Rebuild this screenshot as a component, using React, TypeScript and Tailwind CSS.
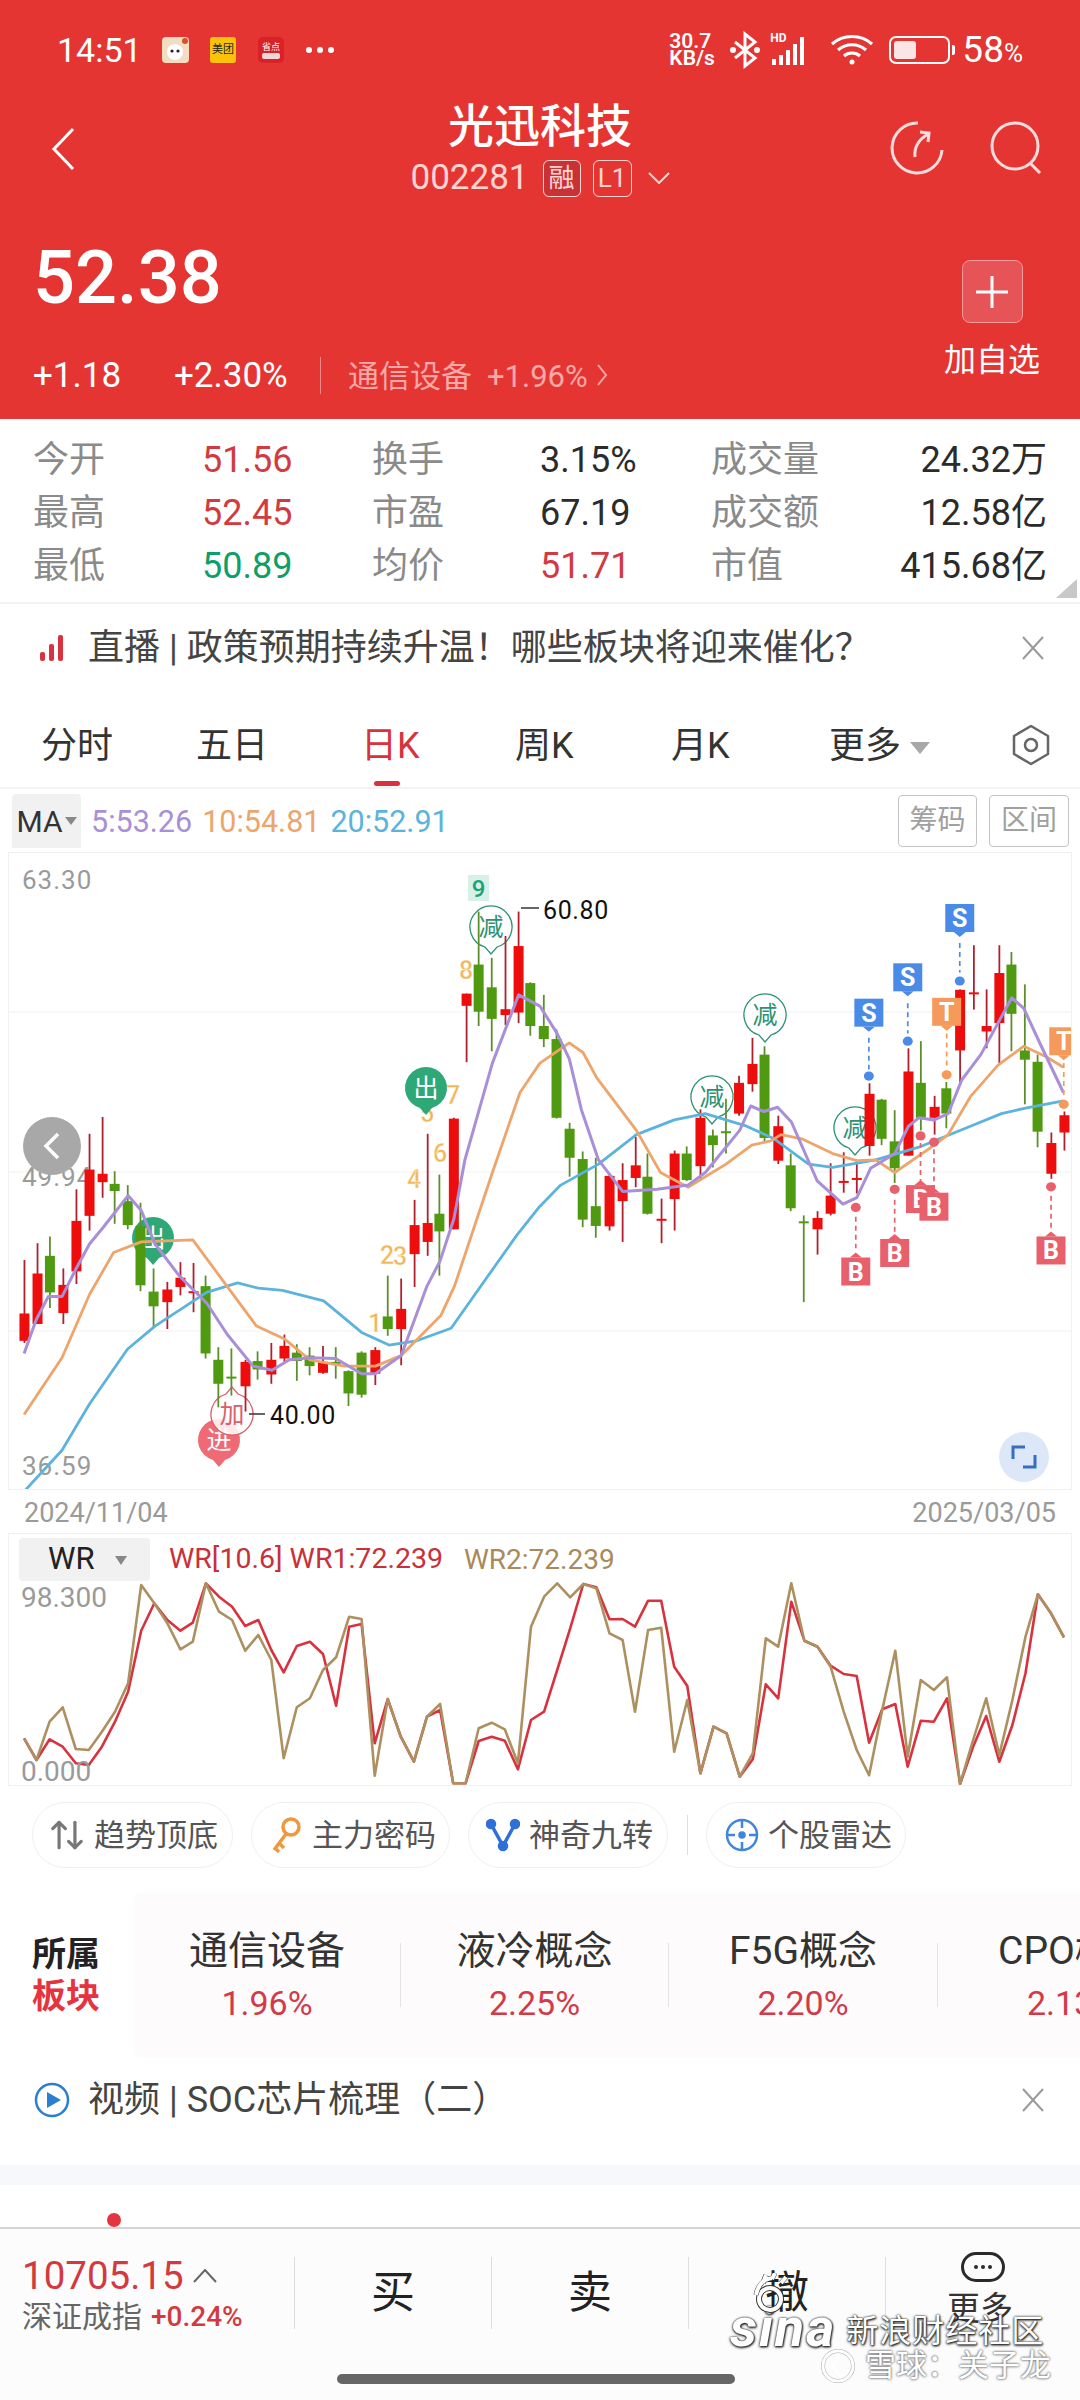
import { ArrowUpDown } from "lucide-react";

type Candle = [number, number, number, number, number, "r" | "g"];

const leftCandles: Candle[] = [
  [71, 998, 1195, 1125, 1190, "r"], [109, 958, 1150, 1030, 1150, "r"], [145, 942, 1112, 988, 1075, "g"],
  [184, 1018, 1150, 1057, 1124, "r"], [222, 830, 1055, 905, 1025, "r"], [260, 698, 928, 783, 893, "r"],
  [298, 658, 850, 793, 813, "r"], [333, 787, 912, 817, 834, "g"], [371, 820, 925, 858, 915, "g"],
  [408, 862, 1072, 918, 1058, "g"], [446, 1018, 1160, 1073, 1108, "g"], [486, 1050, 1162, 1068, 1098, "r"],
  [524, 1003, 1082, 1040, 1062, "r"], [562, 1005, 1122, 1072, 1072, "r"], [597, 1035, 1232, 1060, 1220, "g"],
  [634, 1205, 1348, 1235, 1292, "g"], [672, 1208, 1320, 1275, 1275, "g"], [713, 1235, 1358, 1240, 1298, "r"],
  [748, 1215, 1282, 1238, 1258, "g"], [788, 1195, 1292, 1235, 1270, "r"], [826, 1175, 1240, 1202, 1232, "r"],
  [862, 1198, 1285, 1218, 1238, "g"], [899, 1205, 1272, 1225, 1250, "g"], [938, 1202, 1268, 1240, 1266, "r"],
  [975, 1205, 1280, 1240, 1240, "g"], [1012, 1260, 1345, 1262, 1315, "g"], [1050, 1215, 1325, 1218, 1318, "g"],
  [1090, 1205, 1295, 1212, 1268, "r"], [1126, 1035, 1178, 1132, 1162, "g"], [1165, 1042, 1248, 1114, 1162, "r"],
  [1204, 855, 1062, 915, 984, "r"], [1242, 698, 988, 910, 955, "r"], [1276, 795, 1035, 888, 930, "g"],
  [1318, 660, 925, 662, 925, "r"], [1355, 365, 528, 365, 394, "r"], [1390, 170, 442, 296, 408, "g"],
  [1428, 280, 502, 350, 425, "g"], [1468, 228, 440, 402, 416, "r"], [1506, 170, 435, 252, 410, "r"],
  [1540, 338, 465, 340, 442, "g"],
];

const rightCandles: Candle[] = [
  [11, 368, 492, 442, 473, "g"], [48, 450, 662, 473, 660, "g"], [86, 672, 800, 686, 755, "g"],
  [124, 740, 920, 758, 902, "g"], [162, 755, 945, 870, 917, "g"], [202, 792, 928, 798, 918, "r"],
  [240, 768, 955, 808, 858, "r"], [278, 705, 825, 773, 803, "r"], [312, 745, 890, 800, 888, "g"],
  [353, 852, 958, 900, 900, "r"], [391, 738, 928, 745, 853, "r"], [426, 728, 810, 745, 808, "g"],
  [466, 640, 805, 660, 775, "r"], [502, 688, 778, 702, 725, "g"], [540, 615, 745, 692, 692, "g"],
  [578, 560, 655, 577, 650, "r"], [617, 470, 598, 532, 580, "r"], [652, 490, 718, 510, 708, "g"],
  [692, 655, 770, 680, 762, "r"], [728, 745, 882, 773, 875, "g"], [766, 892, 1098, 906, 906, "g"],
  [806, 882, 985, 898, 925, "r"], [844, 768, 892, 845, 888, "r"], [882, 742, 838, 810, 810, "r"],
  [920, 765, 840, 803, 803, "r"], [957, 578, 750, 603, 727, "r"], [992, 615, 725, 617, 710, "g"],
  [1030, 642, 815, 716, 780, "g"], [1070, 495, 750, 550, 750, "r"], [1106, 478, 690, 577, 660, "g"],
  [1146, 608, 700, 634, 660, "r"], [1180, 575, 685, 590, 650, "g"], [1220, 355, 578, 356, 500, "r"],
  [1260, 250, 403, 362, 362, "r"], [1297, 355, 495, 442, 455, "r"], [1334, 250, 530, 316, 435, "r"],
  [1369, 266, 502, 296, 413, "g"], [1408, 343, 628, 500, 522, "g"], [1445, 510, 730, 527, 693, "g"],
  [1485, 695, 805, 720, 793, "r"], [1523, 645, 738, 654, 695, "r"],
];

// the trend lines were read off the left and right crops, so they stay in crop units
const py = (y: number) => 840 + y / 2.376;
const lx = (x: number) => x / 2.904;
const rx = (x: number) => 540 + x / 2.904;

const trend = (left: number[][], right: number[][]) =>
  [
    ...left.map(([x, y]) => `${lx(x).toFixed(1)},${py(y).toFixed(1)}`),
    ...right.map(([x, y]) => `${rx(x).toFixed(1)},${py(y).toFixed(1)}`),
  ].join(" ");

const ma5 = trend(
  [[70, 1220], [105, 1140], [140, 1085], [180, 1085], [220, 1020], [260, 960], [300, 920], [372, 845], [410, 880], [450, 960], [520, 1035], [600, 1100], [660, 1175], [735, 1250], [790, 1260], [840, 1235], [900, 1230], [975, 1232], [1050, 1268], [1090, 1268], [1165, 1225], [1240, 1060], [1278, 1000], [1318, 900], [1350, 760], [1430, 530], [1506, 368], [1568, 395]],
  [[0, 395], [50, 460], [85, 520], [120, 640], [170, 760], [240, 835], [340, 830], [430, 820], [480, 790], [580, 690], [612, 632], [650, 645], [690, 635], [730, 670], [805, 810], [880, 865], [920, 850], [960, 780], [1030, 745], [1070, 680], [1100, 660], [1145, 665], [1185, 650], [1225, 570], [1280, 510], [1370, 375], [1405, 400], [1450, 480], [1520, 600]]
);
const ma10 = trend(
  [[70, 1365], [180, 1230], [260, 1080], [330, 980], [410, 955], [560, 950], [650, 1050], [745, 1155], [825, 1185], [900, 1235], [1000, 1250], [1090, 1250], [1165, 1225], [1280, 1130], [1320, 1060], [1430, 790], [1510, 600], [1568, 530]],
  [[0, 530], [85, 482], [125, 505], [165, 565], [280, 690], [350, 790], [430, 825], [540, 770], [615, 725], [670, 715], [700, 700], [760, 710], [850, 745], [920, 762], [975, 760], [1030, 790], [1145, 725], [1185, 700], [1250, 610], [1330, 535], [1405, 490], [1470, 515], [1520, 540]]
);
const ma20 = trend(
  [[70, 1548], [180, 1450], [260, 1340], [370, 1210], [450, 1155], [600, 1075], [690, 1052], [750, 1065], [820, 1070], [940, 1095], [1050, 1170], [1130, 1200], [1210, 1190], [1310, 1160], [1500, 940], [1568, 870]],
  [[0, 870], [60, 820], [170, 770], [280, 700], [390, 665], [480, 650], [600, 680], [680, 710], [780, 770], [850, 778], [975, 760], [1100, 730], [1250, 680], [1340, 650], [1410, 637], [1520, 620]]
);

const wrX = [35, 53, 72, 91, 110, 129, 148, 167, 186, 205, 224, 243, 262, 280, 299, 318, 337, 356, 375, 394, 412, 431, 450, 469, 488, 507, 525, 544, 563, 582, 601, 620, 639, 658, 676, 695, 714, 733, 752, 771, 790, 809, 828, 847, 866, 885, 904, 922, 941, 960, 979, 998, 1017, 1036, 1055, 1074, 1093, 1112, 1130, 1149, 1168, 1187, 1206, 1225, 1244, 1262, 1281, 1300, 1318, 1337, 1356, 1375, 1394, 1413, 1432, 1451, 1470, 1489, 1507, 1526, 1545];
const wr2 = [715, 780, 665, 622, 747, 750, 695, 635, 550, 255, 310, 370, 448, 425, 250, 335, 360, 452, 405, 480, 775, 622, 595, 510, 472, 350, 357, 827, 597, 710, 785, 650, 612, 850, 850, 685, 668, 688, 790, 380, 290, 250, 292, 252, 265, 400, 420, 635, 390, 383, 755, 600, 820, 680, 700, 830, 760, 415, 440, 250, 422, 440, 500, 635, 750, 826, 630, 452, 770, 540, 570, 532, 852, 720, 595, 765, 600, 410, 283, 340, 412];
const wr1 = [715, 780, 718, 740, 790, 795, 740, 665, 575, 392, 310, 360, 392, 368, 250, 290, 320, 378, 360, 450, 517, 438, 425, 462, 617, 380, 372, 730, 597, 710, 785, 650, 630, 850, 850, 723, 710, 722, 808, 660, 635, 510, 385, 252, 262, 358, 357, 380, 302, 302, 500, 558, 820, 680, 700, 830, 778, 553, 595, 305, 422, 440, 497, 522, 528, 728, 628, 612, 800, 662, 665, 595, 852, 740, 648, 785, 675, 520, 283, 340, 412];
const wrLine = (ys: number[]) =>
  ys.map((y, i) => `${(wrX[i] / 1.452).toFixed(1)},${(1500 + y / 3).toFixed(1)}`).join(" ");

function CandleMark({ c, toX }: { c: Candle; toX: (x: number) => number }) {
  const [x, wt, wb, bt, bb, kind] = c;
  const px = toX(x);
  const body = kind === "r" ? "#ee0d0d" : "#4f9a10";
  const wick = kind === "r" ? "#b0202c" : "#5c8f2c";
  return (
    <g>
      <line x1={px} x2={px} y1={py(wt)} y2={py(wb)} stroke={wick} strokeWidth={1.8} />
      <rect x={px - 5} y={py(bt)} width={10} height={Math.max(2, py(bb) - py(bt))} fill={body} />
    </g>
  );
}

function Bubble({ cx, cy, label, solid, color, up }: { cx: number; cy: number; label: string; solid?: boolean; color: string; up?: boolean }) {
  const r = 21;
  const s = up ? -1 : 1;
  return (
    <g>
      <path
        d={`M${cx - 6} ${cy + s * (r - 1)} A${r} ${r} 0 1 ${up ? 0 : 1} ${cx + 6} ${cy + s * (r - 1)} L${cx} ${cy + s * (r + 6)} Z`}
        fill={solid ? color : "#ffffff"}
        fillOpacity={solid ? 1 : 0.85}
        stroke={color}
        strokeWidth={solid ? 0 : 1.3}
      />
      <text x={cx} y={cy + 9} textAnchor="middle" fontSize={25} fill={solid ? "#ffffff" : color}>
        {label}
      </text>
    </g>
  );
}

function TradeTag({ x, top, label, fill, dashFrom, dashTo, dotY, below }: { x: number; top: number; label: string; fill: string; dashFrom: number; dashTo: number; dotY: number; below?: boolean }) {
  const cx = rx(x);
  const y = py(top);
  const h = 28;
  return (
    <g>
      <line x1={cx} x2={cx} y1={py(dashFrom)} y2={py(dashTo)} stroke={fill} strokeWidth={1.7} strokeDasharray="5 4" />
      <ellipse cx={cx} cy={py(dotY)} rx={5} ry={4.6} fill={fill} />
      <rect x={cx - 14.5} y={y} width={29} height={h} fill={fill} />
      {below ? (
        <polygon points={`${cx - 6},${y} ${cx + 6},${y} ${cx},${y - 5}`} fill={fill} />
      ) : (
        <polygon points={`${cx - 6},${y + h} ${cx + 6},${y + h} ${cx},${y + h + 5}`} fill={fill} />
      )}
      <text x={cx} y={y + 23} textAnchor="middle" fontSize={25} fontWeight={700} fill="#ffffff">
        {label}
      </text>
    </g>
  );
}

function Sequence({ x, y, n }: { x: number; y: number; n: string }) {
  return (
    <text x={x} y={y} textAnchor="middle" fontSize={25} fontWeight={500} fill="#efb65c" stroke="#fdf3df" strokeWidth={0.4}>
      {n}
    </text>
  );
}

const KLineChart = () => (
  <svg className="block" width={1062} height={636} viewBox="9 853 1062 636">
    {[1012, 1172, 1331].map((y) => (
      <line key={y} x1={9} x2={1071} y1={y} y2={y} stroke="#f6f6f6" strokeWidth={1.5} />
    ))}
    <text x={22} y={889} fontSize={26} letterSpacing={1} fill="#9a9a9a">63.30</text>
    <text x={22} y={1186} fontSize={26} letterSpacing={1} fill="#9a9a9a">49.94</text>
    <text x={22} y={1475} fontSize={26} letterSpacing={1} fill="#9a9a9a">36.59</text>

    <Sequence x={375} y={1332} n="1" />
    <Sequence x={387} y={1264} n="2" />
    <Sequence x={400} y={1265} n="3" />
    <Sequence x={414} y={1188} n="4" />
    <Sequence x={427} y={1122} n="5" />
    <Sequence x={440} y={1162} n="6" />
    <Sequence x={453} y={1104} n="7" />
    <Sequence x={466} y={979} n="8" />
    <rect x={468} y={875} width={21} height={26} fill="#d9f0e6" />
    <text x={478.5} y={897} textAnchor="middle" fontSize={24} fontWeight={500} fill="#1ba27a">9</text>

    <Bubble cx={219} cy={1440} label="进" solid color="#ef6a75" />
    <Bubble cx={232} cy={1414} label="加" color="#d9606c" up />
    <Bubble cx={153} cy={1238} label="出" solid color="#2fa878" />
    <Bubble cx={491} cy={927} label="减" color="#2c9273" />
    <Bubble cx={712} cy={1097} label="减" color="#2c9273" />
    <Bubble cx={855} cy={1128} label="减" color="#2c9273" />

    {leftCandles.map((c) => (
      <CandleMark key={`l${c[0]}`} c={c} toX={lx} />
    ))}
    {rightCandles.map((c) => (
      <CandleMark key={`r${c[0]}`} c={c} toX={rx} />
    ))}

    <polyline points={ma20} fill="none" stroke="#5cb3dc" strokeWidth={2.8} strokeLinejoin="round" />
    <polyline points={ma10} fill="none" stroke="#eda56c" strokeWidth={2.8} strokeLinejoin="round" />
    <polyline points={ma5} fill="none" stroke="#a88fd8" strokeWidth={3} strokeLinejoin="round" />

    <Bubble cx={426} cy={1088} label="出" solid color="#2fa878" />
    <Bubble cx={765} cy={1015} label="减" color="#2c9273" />

    <line x1={521} x2={539} y1={908} y2={908} stroke="#333" strokeWidth={1.5} />
    <text x={543} y={919} fontSize={25} letterSpacing={0.6} fill="#111">60.80</text>
    <line x1={249} x2={265} y1={1414} y2={1414} stroke="#333" strokeWidth={1.5} />
    <text x={270} y={1424} fontSize={25} letterSpacing={0.6} fill="#111">40.00</text>

    <TradeTag x={955} top={377} label="S" fill="#4a8be8" dashFrom={470} dashTo={545} dotY={561} />
    <TradeTag x={1068} top={293} label="S" fill="#4a8be8" dashFrom={388} dashTo={460} dotY={478} />
    <TradeTag x={1219} top={152} label="S" fill="#4a8be8" dashFrom={245} dashTo={315} dotY={335} />
    <TradeTag x={1181} top={375} label="T" fill="#f59a5a" dashFrom={460} dashTo={545} dotY={558} />
    <TradeTag x={1521} top={445} label="T" fill="#f59a5a" dashFrom={530} dashTo={610} dotY={628} />
    <TradeTag x={917} top={992} label="B" fill="#e8606c" dashFrom={895} dashTo={970} dotY={873} below />
    <TradeTag x={1030} top={948} label="B" fill="#e8606c" dashFrom={855} dashTo={935} dotY={830} below />
    <TradeTag x={1105} top={820} label="B" fill="#e8606c" dashFrom={720} dashTo={810} dotY={703} below />
    <TradeTag x={1144} top={838} label="B" fill="#e8606c" dashFrom={735} dashTo={825} dotY={718} below />
    <TradeTag x={1484} top={942} label="B" fill="#e8606c" dashFrom={845} dashTo={930} dotY={824} below />

    <circle cx={52} cy={1146} r={29} fill="#a8a8a8" />
    <polyline points="58,1134 46,1146 58,1158" fill="none" stroke="#ffffff" strokeWidth={3.5} />
    <circle cx={1024} cy={1457} r={25} fill="#dce8f8" />
    <path d="M1013 1459V1447H1025M1035 1455V1467H1023" fill="none" stroke="#3a6cc0" strokeWidth={3} />
  </svg>
);

const WrChart = () => (
  <svg className="absolute left-0 top-0" width={1062} height={251} viewBox="9 1534 1062 251">
    <polyline points={wrLine(wr1)} fill="none" stroke="#d8323f" strokeWidth={2.6} strokeLinejoin="round" />
    <polyline points={wrLine(wr2)} fill="none" stroke="#ad9060" strokeWidth={2.6} strokeLinejoin="round" />
    <text x={21} y={1607} fontSize={28} fill="#9a9a9a">98.300</text>
    <text x={21} y={1781} fontSize={28} fill="#9a9a9a">0.000</text>
  </svg>
);

const Cross = () => (
  <svg width={24} height={24} viewBox="0 0 24 24" stroke="#9a9a9a" strokeWidth={2} className="absolute left-[1021px]">
    <line x1={2} y1={1} x2={22} y2={23} />
    <line x1={22} y1={1} x2={2} y2={23} />
  </svg>
);

const stats = [
  ["今开", "51.56", "text-[#d33a40]", "换手", "3.15%", "text-[#2b2b2b]", "成交量", "24.32万"],
  ["最高", "52.45", "text-[#d33a40]", "市盈", "67.19", "text-[#2b2b2b]", "成交额", "12.58亿"],
  ["最低", "50.89", "text-[#0e9f68]", "均价", "51.71", "text-[#d33a40]", "市值", "415.68亿"],
];

const sectors = [
  { name: "通信设备", pct: "1.96%", w: "w-[267px]" },
  { name: "液冷概念", pct: "2.25%", w: "w-[268px]" },
  { name: "F5G概念", pct: "2.20%", w: "w-[269px]" },
];

const StatusBar = () => (
  <div className="flex h-[100px] items-center text-white">
    <span className="ml-[57px] w-[105px] text-[34px]">14:51</span>
    <svg width={27} height={26} viewBox="0 0 27 26">
      <rect width={27} height={26} rx={4} fill="#f3dcc0" />
      <circle cx={13} cy={15} r={8} fill="#ffffff" />
      <circle cx={10} cy={14} r={1.6} fill="#222" />
      <circle cx={16} cy={14} r={1.6} fill="#222" />
      <circle cx={23} cy={4} r={3} fill="#d8502a" />
    </svg>
    <span className="ml-[21px] flex h-[26px] w-[26px] items-center justify-center rounded-[3px] bg-[#fcc20b] text-[11px] text-[#222]">美团</span>
    <span className="ml-[22px] flex h-[26px] w-[26px] flex-col items-center justify-center rounded-[5px] bg-[#d92128] text-[9px] leading-[10px]">
      省点
      <span className="mt-[1px] h-[6px] w-[18px] rounded-[2px] bg-[#f3d6d6]" />
    </span>
    <span className="ml-[22px] flex gap-[5px]">
      <span className="h-[6px] w-[6px] rounded-full bg-white" />
      <span className="h-[6px] w-[6px] rounded-full bg-white" />
      <span className="h-[6px] w-[6px] rounded-full bg-white" />
    </span>
    <div className="ml-auto flex items-center">
      <span className="flex w-[50px] flex-col text-[21px] leading-[17px] font-semibold">
        <span>30.7</span>
        <span>KB/s</span>
      </span>
      <svg width={32} height={38} viewBox="0 0 32 38" fill="none" stroke="#fff" strokeWidth={3} className="ml-[10px]">
        <path d="M6 11 26 27 16 35V3L26 11 6 27" />
        <circle cx={4} cy={19} r={1.5} fill="#fff" />
        <circle cx={28} cy={19} r={1.5} fill="#fff" />
      </svg>
      <span className="relative ml-[9px] flex h-[30px] w-[50px] items-end gap-[3px] pl-[2px]">
        <span className="absolute left-0 top-[-3px] text-[12px] leading-none font-bold">HD</span>
        <span className="h-[6px] w-[4px] bg-white" />
        <span className="h-[10px] w-[4px] bg-white" />
        <span className="h-[15px] w-[4px] bg-white" />
        <span className="h-[21px] w-[4px] bg-white" />
        <span className="h-[28px] w-[4px] bg-white" />
      </span>
      <svg width={44} height={32} viewBox="0 0 44 32" fill="none" stroke="#fff" strokeWidth={3.2} className="ml-[10px]">
        <path d="M2 10C13 0 31 0 42 10M8 16C16 9 28 9 36 16M14 22C18 18 26 18 30 22" />
        <circle cx={22} cy={28} r={2.5} fill="#fff" stroke="none" />
      </svg>
      <span className="ml-[15px] flex h-[28px] w-[61px] rounded-[7px] border-[2.5px] border-white p-[3px]">
        <span className="h-full w-[22px] rounded-[3px] bg-[#fbe6e6]" />
      </span>
      <span className="ml-[2px] h-[10px] w-[3px] rounded-r-[2px] bg-white" />
      <span className="mr-[57px] ml-[7px] text-[37px]">
        58<span className="text-[26px]">%</span>
      </span>
    </div>
  </div>
);

const Header = () => (
  <div className="h-[419px] bg-[#e53533] text-white">
    <StatusBar />
    <div className="relative flex h-[100px] justify-center">
      <svg width={24} height={44} viewBox="0 0 24 44" fill="none" stroke="#fff" strokeWidth={3} className="absolute left-[51px] top-[27px]">
        <polyline points="22,2 3,22 22,42" />
      </svg>
      <div className="flex flex-col items-center">
        <span className="mt-[1px] text-[46px] leading-[50px] font-medium">光迅科技</span>
        <div className="mt-[8px] flex items-center text-[#ffd5d4]">
          <span className="text-[35px] leading-[38px]">002281</span>
          <span className="ml-[14px] flex h-[37px] w-[38px] items-center justify-center rounded-[6px] border border-[#ffd5d4] bg-[#c93234] text-[26px] leading-none">融</span>
          <span className="ml-[12px] flex h-[37px] w-[39px] items-center justify-center rounded-[6px] border border-[#ffd5d4] text-[26px] leading-none">L1</span>
          <svg width={22} height={12} viewBox="0 0 22 12" fill="none" stroke="#ffd5d4" strokeWidth={2} className="ml-[16px]">
            <polyline points="1,1 11,11 21,1" />
          </svg>
        </div>
      </div>
      <svg width={54} height={54} viewBox="0 0 54 54" fill="none" stroke="#fbdcdc" strokeWidth={3} className="absolute left-[890px] top-[21px]">
        <path d="M28 2A25 25 0 1 0 52 29" />
        <path d="M25 36C24 27 28 19 38 13M30 11 39 12 38 21" />
      </svg>
      <svg width={54} height={54} viewBox="0 0 54 54" fill="none" stroke="#fbdcdc" strokeWidth={3} className="absolute left-[989px] top-[20px]">
        <circle cx={26} cy={26} r={23} />
        <line x1={41} y1={43} x2={51} y2={53} />
      </svg>
    </div>
    <div className="flex justify-between">
      <div className="pt-[40px] pl-[33px]">
        <div className="text-[74px] leading-[76px] font-medium">52.38</div>
        <div className="mt-[40px] flex h-[38px] items-center text-[35px] leading-none">
          <span className="w-[141px]">+1.18</span>
          <span className="w-[146px]">+2.30%</span>
          <span className="h-[37px] w-[1px] bg-[#f08a88]" />
          <span className="ml-[27px] text-[#f6a9a6]">
            <span className="text-[31px]">通信设备</span>
            <span className="ml-[15px] text-[31px]">+1.96%</span>
          </span>
          <svg width={12} height={24} viewBox="0 0 12 24" fill="none" stroke="#f6a9a6" strokeWidth={2} className="ml-[8px]">
            <polyline points="2,2 10,12 2,22" />
          </svg>
        </div>
      </div>
      <div className="mr-[40px] flex w-[96px] flex-col items-center pt-[60px]">
        <div className="flex h-[63px] w-[61px] items-center justify-center rounded-[8px] border border-[#f39a9a] bg-[#e75458]">
          <svg width={32} height={32} viewBox="0 0 32 32" stroke="#fff" strokeWidth={3}>
            <line x1={16} y1={0} x2={16} y2={32} />
            <line x1={0} y1={16} x2={32} y2={16} />
          </svg>
        </div>
        <span className="mt-[18px] text-[32px] leading-[38px] whitespace-nowrap">加自选</span>
      </div>
    </div>
  </div>
);

const Quote = () => (
  <div className="relative h-[185px] border-b-[2px] border-[#f3f3f3] pt-[14px] pl-[33px]">
    {stats.map(([a, av, ac, b, bv, bc, c, cv]) => (
      <div key={a} className="grid h-[53px] grid-cols-[169px_170px_168px_171px_130px_206px] items-center text-[36px] leading-none">
        <span className="text-[#8a8a8a]">{a}</span>
        <span className={ac}>{av}</span>
        <span className="text-[#8a8a8a]">{b}</span>
        <span className={bc}>{bv}</span>
        <span className="whitespace-nowrap text-[#8a8a8a]">{c}</span>
        <span className="text-right text-[#2b2b2b]">{cv}</span>
      </div>
    ))}
    <span className="absolute right-[3px] bottom-[4px] h-0 w-0 border-b-[19px] border-l-[21px] border-b-[#c8c8c8] border-l-transparent" />
  </div>
);

const LiveBanner = () => (
  <div className="relative flex h-[88px] items-center">
    <span className="ml-[40px] flex h-[26px] items-end gap-[4px]">
      <span className="h-[9px] w-[5px] rounded-[2px] bg-[#d8323f]" />
      <span className="h-[17px] w-[5px] rounded-[2px] bg-[#d8323f]" />
      <span className="h-[26px] w-[5px] rounded-[2px] bg-[#d8323f]" />
    </span>
    <span className="ml-[25px] text-[36px] text-[#444]">直播 | 政策预期持续升温！哪些板块将迎来催化？</span>
    <Cross />
  </div>
);

const Tabs = () => (
  <div className="relative flex h-[97px] items-center border-b-[2px] border-[#f3f3f3] pt-[13px] pl-[41px] text-[36px] leading-none text-[#333]">
    <span className="w-[155px]">分时</span>
    <span className="w-[165px]">五日</span>
    <span className="w-[154px] text-[#d8323f]">日K</span>
    <span className="w-[156px]">周K</span>
    <span className="w-[158px]">月K</span>
    <span>更多</span>
    <span className="mt-[4px] ml-[9px] h-0 w-0 border-x-[10px] border-t-[12px] border-x-transparent border-t-[#a8a8a8]" />
    <svg width={38} height={42} viewBox="0 0 38 42" fill="none" stroke="#666" strokeWidth={2.5} className="-mt-[3px] ml-[82px]">
      <polygon points="19,2 36,12 36,30 19,40 2,30 2,12" strokeLinejoin="round" />
      <circle cx={19} cy={21} r={6} />
    </svg>
    <span className="absolute bottom-[1px] left-[374px] h-[5px] w-[26px] rounded-full bg-[#d8323f]" />
  </div>
);

const MaRow = () => (
  <div className="flex h-[63px] items-start pt-[5px]">
    <span className="ml-[12px] flex h-[54px] w-[69px] items-center justify-center rounded-t-[4px] bg-[#f1f1f1] text-[30px] text-[#333]">
      MA
      <span className="ml-[2px] h-0 w-0 border-x-[6px] border-t-[8px] border-x-transparent border-t-[#888]" />
    </span>
    <span className="mt-[10px] ml-[10px] text-[30.5px] leading-[36px] whitespace-nowrap">
      <span className="text-[#a88fd8]">5:53.26</span>
      <span className="ml-[10px] text-[#eda56c]">10:54.81</span>
      <span className="ml-[10px] text-[#5cb3dc]">20:52.91</span>
    </span>
    <span className="mt-[1px] ml-auto flex items-center justify-center gap-[12px] text-[28px] text-[#a0a0a0]">
      <span className="flex h-[52px] w-[79px] items-center justify-center rounded-[4px] border border-[#c4c4c4]">筹码</span>
      <span className="mr-[11px] flex h-[52px] w-[80px] items-center justify-center rounded-[4px] border border-[#c4c4c4]">区间</span>
    </span>
  </div>
);

const WrPanel = () => (
  <div className="relative ml-[8px] h-[253px] w-[1064px] border border-[#f1f1f1]">
    <WrChart />
    <div className="relative flex items-center pt-[4px] pl-[10px]">
      <span className="flex h-[43px] w-[131px] items-center rounded-[4px] bg-[#f1f1f1] pl-[29px] text-[31px] text-[#222]">
        WR
        <span className="mt-[2px] ml-[20px] h-0 w-0 border-x-[6px] border-t-[9px] border-x-transparent border-t-[#888]" />
      </span>
      <span className="ml-[19px] text-[28.5px] whitespace-nowrap text-[#c8303a]">WR[10.6] WR1:72.239</span>
      <span className="ml-[21px] text-[28px] whitespace-nowrap text-[#a98a5a]">WR2:72.239</span>
    </div>
  </div>
);

const Chips = () => (
  <div className="mt-[16px] flex h-[66px] items-center pl-[32px] text-[31px] leading-none text-[#555]">
    <span className="flex h-[66px] w-[201px] items-center rounded-full border border-[#efefef] pl-[15px]">
      <ArrowUpDown size={38} strokeWidth={2} className="text-[#777]" />
      <span className="ml-[8px]">趋势顶底</span>
    </span>
    <span className="ml-[18px] flex h-[66px] w-[199px] items-center rounded-full border border-[#efefef] pl-[18px]">
      <svg width={32} height={38} viewBox="0 0 32 38" fill="none" stroke="#f0983f" strokeWidth={3.5}>
        <circle cx={21} cy={11} r={8} />
        <path d="M16 18 4 34M9 27 14 32M5 32 9 36" />
      </svg>
      <span className="ml-[10px]">主力密码</span>
    </span>
    <span className="ml-[18px] flex h-[66px] w-[200px] items-center rounded-full border border-[#efefef] pl-[17px]">
      <svg width={34} height={38} viewBox="0 0 34 38" fill="none" stroke="#2f6fd8" strokeWidth={3.5}>
        <path d="M5 8 17 30 29 8" />
        <circle cx={5} cy={8} r={3.5} fill="#2f6fd8" />
        <circle cx={29} cy={8} r={3.5} fill="#2f6fd8" />
        <circle cx={17} cy={30} r={3.5} fill="#2f6fd8" />
      </svg>
      <span className="ml-[9px]">神奇九转</span>
    </span>
    <span className="ml-[19px] h-[40px] w-[1px] bg-[#dedede]" />
    <span className="ml-[18px] flex h-[66px] w-[200px] items-center rounded-full border border-[#efefef] pl-[18px]">
      <svg width={34} height={38} viewBox="0 0 34 38" fill="none" stroke="#3f86dc" strokeWidth={2.5}>
        <circle cx={17} cy={19} r={15} />
        <path d="M17 4V12M17 26V34M2 19H10M24 19H32" />
        <circle cx={17} cy={19} r={2.5} fill="#3f86dc" />
      </svg>
      <span className="ml-[9px]">个股雷达</span>
    </span>
  </div>
);

const Sectors = () => (
  <div className="mt-[25px] flex h-[164px] items-center overflow-hidden">
    <div className="flex w-[134px] shrink-0 flex-col pl-[32px] text-[34px] leading-[42px] font-bold">
      <span className="text-[#222]">所属</span>
      <span className="text-[#e5333f]">板块</span>
    </div>
    <div className="flex h-full flex-1 items-center overflow-hidden rounded-l-[6px] bg-[#fdfbfc]">
      {sectors.map((s) => (
        <div key={s.name} className={`flex h-[64px] ${s.w} shrink-0 flex-col items-center justify-center border-r border-[#e4e4e4] pt-[2px] leading-none`}>
          <span className="text-[39px] text-[#333]">{s.name}</span>
          <span className="mt-[15px] text-[34px] text-[#d33a48]">{s.pct}</span>
        </div>
      ))}
      <div className="flex h-[64px] shrink-0 flex-col justify-center pt-[2px] pl-[60px] leading-none whitespace-nowrap">
        <span className="text-[39px] text-[#333]">CPO概念</span>
        <span className="mt-[15px] ml-[29px] text-[34px] text-[#d33a48]">2.13%</span>
      </div>
    </div>
  </div>
);

const VideoBanner = () => (
  <div className="relative flex h-[108px] items-center pb-[22px]">
    <svg width={36} height={36} viewBox="0 0 36 36" className="ml-[34px]">
      <circle cx={18} cy={18} r={16} fill="none" stroke="#2c7fd0" strokeWidth={2.5} />
      <polygon points="13,10 27,18 13,26" fill="#2c7fd0" />
    </svg>
    <span className="ml-[18px] text-[36px] text-[#444]">视频 | SOC芯片梳理（二）</span>
    <Cross />
  </div>
);

const Footer = () => (
  <div className="relative h-[173px] border-t-2 border-[#d4d4d4] bg-[#fdfcfd]">
    <span className="absolute -top-[16px] left-[107px] h-[14px] w-[14px] rounded-full bg-[#e5333f]" />
    <div className="flex h-[100px] items-center pt-[27px]">
      <div className="flex w-[294px] flex-col pl-[22px]">
        <span className="flex items-center text-[38.5px] leading-[44px] text-[#d33a40]">
          10705.15
          <svg width={24} height={14} viewBox="0 0 24 14" fill="none" stroke="#666" strokeWidth={2} className="ml-[9px]">
            <polyline points="1,13 12,1 23,13" />
          </svg>
        </span>
        <span className="mt-[4px] flex items-center leading-none">
          <span className="text-[30px] text-[#666]">深证成指</span>
          <span className="ml-[9px] text-[28px] font-medium text-[#d33a40]">+0.24%</span>
        </span>
      </div>
      {["买", "卖", "撤"].map((t) => (
        <span key={t} className="flex h-[72px] w-[197px] items-center justify-center border-l border-[#dedede] text-[44px] text-[#222]">
          {t}
        </span>
      ))}
      <span className="flex h-[72px] flex-1 flex-col items-center border-l border-[#dedede]">
        <span className="-mt-[5px] flex h-[44px] w-[44px] items-center justify-center gap-[3px] rounded-full border-[3px] border-[#2a2a2a]">
          <span className="h-[4px] w-[4px] rounded-full bg-[#2a2a2a]" />
          <span className="h-[4px] w-[4px] rounded-full bg-[#2a2a2a]" />
          <span className="h-[4px] w-[4px] rounded-full bg-[#2a2a2a]" />
        </span>
        <span className="mt-[7px] mr-[6px] text-[33px] leading-[40px] text-[#333]">更多</span>
      </span>
    </div>
    <span className="absolute bottom-[16px] left-[337px] h-[10px] w-[398px] rounded-full bg-[#666666]" />
    {/* sina / xueqiu watermark sits over the buttons */}
    <div className="absolute top-[74px] left-[730px] flex items-end text-white [text-shadow:0_0_2px_#222,0_1px_3px_#333,1px_1px_2px_#333]">
      <span className="relative text-[54px] leading-[50px] font-bold tracking-[2px] italic">
        sina
        <svg width={40} height={44} viewBox="0 0 40 44" fill="none" stroke="#fff" strokeWidth={4} className="absolute -top-[30px] left-[20px]">
          <circle cx={20} cy={26} r={11} stroke="#333" strokeWidth={6} />
          <circle cx={20} cy={26} r={11} />
          <path d="M6 22C8 12 14 6 22 5M13 10 16 2M22 6 25 0M31 10 36 4" stroke="#333" strokeWidth={5} />
          <path d="M6 22C8 12 14 6 22 5M13 10 16 2M22 6 25 0M31 10 36 4" />
        </svg>
      </span>
      <span className="mb-[4px] ml-[10px] text-[32px] leading-[36px] tracking-[1px]">新浪财经社区</span>
    </div>
    <div className="absolute top-[115px] left-[820px] flex items-center text-[31px] leading-[40px] text-white [text-shadow:0_0_3px_#666,0_0_2px_#666]">
      <svg width={36} height={44} viewBox="0 0 36 44" fill="none" stroke="#fff" strokeWidth={3}>
        <circle cx={18} cy={22} r={15} stroke="#aaa" strokeWidth={4} />
        <circle cx={18} cy={22} r={15} />
        <path d="M20 12 12 22 22 34" />
      </svg>
      <span className="ml-[9px]">雪球：关子龙</span>
    </div>
  </div>
);

export default function App() {
  return (
    <div className="relative h-[2400px] w-[1080px] overflow-hidden bg-white font-[Roboto,'Noto_Sans_CJK_SC',sans-serif]">
      <Header />
      <Quote />
      <LiveBanner />
      <Tabs />
      <MaRow />
      <div className="ml-[8px] h-[638px] w-[1064px] overflow-hidden border border-[#f1f1f1]">
        <KLineChart />
      </div>
      <div className="flex h-[43px] items-center justify-between pt-[3px] pr-[24px] pl-[24px] text-[27px] text-[#9a9a9a]">
        <span>2024/11/04</span>
        <span>2025/03/05</span>
      </div>
      <WrPanel />
      <Chips />
      <Sectors />
      <VideoBanner />
      <div className="h-[20px] bg-[#f7f8fc]" />
      <div className="h-[42px]" />
      <Footer />
    </div>
  );
}
